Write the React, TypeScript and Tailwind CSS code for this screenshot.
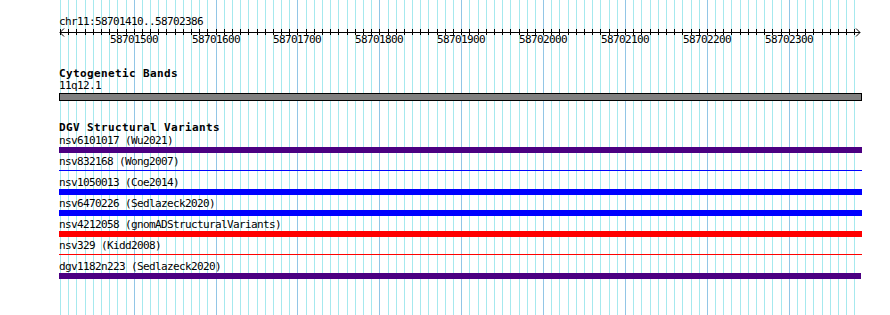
import React from 'react';

const START = 58701410;
const END = 58702386;
const LEFT = 60;
const SCALE = 800 / (END - START + 1);

const xOf = (bp: number) => Math.round(LEFT + (bp - START) * SCALE);

const gridBps: number[] = [];
for (let bp = START; bp <= END; bp += 10) gridBps.push(bp);
const majorBps = gridBps.filter((bp) => bp % 100 === 0);

const mono = { fontFamily: '"DejaVu Sans Mono", "Liberation Mono", monospace' };

interface Variant {
  label: string;
  color: string;
  thin?: boolean;
  short?: boolean;
}

const variants: Variant[] = [
  { label: 'nsv6101017 (Wu2021)', color: 'bg-[#4b0082]' },
  { label: 'nsv832168 (Wong2007)', color: 'bg-[#0000ff]', thin: true },
  { label: 'nsv1050013 (Coe2014)', color: 'bg-[#0000ff]' },
  { label: 'nsv6470226 (Sedlazeck2020)', color: 'bg-[#0000ff]' },
  { label: 'nsv4212058 (gnomADStructuralVariants)', color: 'bg-[#ff0000]' },
  { label: 'nsv329 (Kidd2008)', color: 'bg-[#ff0000]', thin: true },
  { label: 'dgv1182n223 (Sedlazeck2020)', color: 'bg-[#4b0082]', short: true },
];

// light cyan grid behind every track
const Grid: React.FC = () => (
  <svg className="absolute inset-0" width={890} height={315} shapeRendering="crispEdges">
    {gridBps.map((bp) => (
      <line
        key={bp}
        x1={xOf(bp) + 0.5}
        x2={xOf(bp) + 0.5}
        y1={0}
        y2={315}
        stroke={bp % 100 === 0 ? '#92c6e6' : '#a6e9ee'}
        strokeWidth={1}
      />
    ))}
  </svg>
);

const Ruler: React.FC = () => {
  const end = xOf(END) + 1;
  return (
    <div className="relative h-[20px]">
      <svg
        className="absolute top-0 left-[-59px] overflow-visible"
        width={890}
        height={8}
        shapeRendering="crispEdges"
      >
        <line x1={LEFT} x2={end} y1={4.5} y2={4.5} stroke="#000" />
        {gridBps.map((bp) => (
          <line key={bp} x1={xOf(bp) + 0.5} x2={xOf(bp) + 0.5} y1={1} y2={7} stroke="#000" />
        ))}
        <polyline
          points={`${LEFT + 4},0.5 ${LEFT},4.5 ${LEFT + 4},8.5`}
          fill="none"
          stroke="#000"
          shapeRendering="auto"
        />
        <polyline
          points={`${end - 4},0.5 ${end},4.5 ${end - 4},8.5`}
          fill="none"
          stroke="#000"
          shapeRendering="auto"
        />
      </svg>
      {majorBps.map((bp) => (
        <span
          key={bp}
          className="absolute top-[6px] w-[60px] text-center text-[11px] leading-[12px] tracking-[-0.62px] text-black"
          style={{ ...mono, left: xOf(bp) - 59 - 30 }}
        >
          {bp}
        </span>
      ))}
    </div>
  );
};

const Title: React.FC<{ children: React.ReactNode; className?: string }> = ({ children, className }) => (
  <div
    className={`text-[11px] leading-[12px] font-bold tracking-[0.38px] text-black whitespace-nowrap ${className ?? ''}`}
    style={mono}
  >
    {children}
  </div>
);

const Label: React.FC<{ children: React.ReactNode }> = ({ children }) => (
  <div className="h-[12px] text-[11px] leading-[12px] tracking-[-0.62px] text-black whitespace-nowrap" style={mono}>
    {children}
  </div>
);

export default function App() {
  return (
    <div className="relative w-[890px] h-[315px] bg-white overflow-hidden">
      <Grid />
      <div className="relative pl-[59px] pt-[15px]">
        <div className="text-[11px] leading-[13px] tracking-[-0.62px] text-black" style={mono}>
          chr11:58701410..58702386
        </div>
        <Ruler />

        {/* Cytogenetic Bands */}
        <Title className="mt-[20px]">Cytogenetic Bands</Title>
        <Label>11q12.1</Label>
        <div className="mt-[1px] w-[803px] h-[8px] border border-black bg-[#808080]" />

        {/* DGV Structural Variants */}
        <Title className="mt-[21px] mb-[1px]">DGV Structural Variants</Title>
        <div className="flex flex-col">
          {variants.map((v) => (
            <div key={v.label} className="pb-[3px]">
              <Label>{v.label}</Label>
              <div className={`h-[6px] ${v.thin ? 'pt-[2px]' : ''}`}>
                <div
                  className={`${v.thin ? 'h-[1px]' : 'h-[6px]'} ${v.short ? 'w-[802px]' : 'w-[803px]'} ${v.color}`}
                />
              </div>
            </div>
          ))}
        </div>
      </div>
    </div>
  );
}
